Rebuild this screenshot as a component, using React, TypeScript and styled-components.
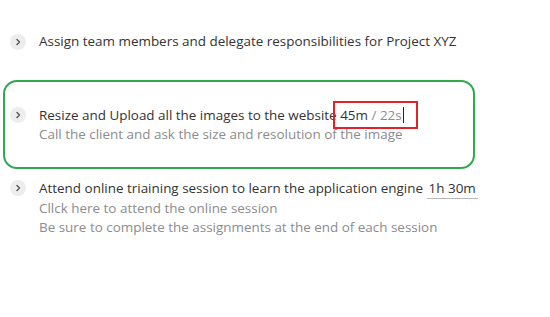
import styled, { createGlobalStyle } from "styled-components";

const GlobalStyle = createGlobalStyle`
  html, body {
    margin: 0;
    padding: 0;
    background: #ffffff;
  }
  body {
    font-family: "Open Sans", "Noto Sans", Arial, sans-serif;
    color: #333333;
  }
`;

const TaskList = styled.div`
  display: flex;
  flex-direction: column;
  padding-top: 32px;
  width: 550px;
`;

const Highlight = styled.div`
  margin: 29px 0 0 3px;
  width: 468px;
  border: 2px solid #2fa84f;
  border-radius: 14px;
  padding: 23.5px 0;
`;

const Task = styled.div<{ $inset: number; $gap?: number }>`
  display: flex;
  align-items: flex-start;
  gap: 13px;
  padding-left: ${({ $inset }) => $inset}px;
  margin-top: ${({ $gap }) => $gap ?? 0}px;
`;

const Chevron = styled.span`
  flex: none;
  display: flex;
  align-items: center;
  justify-content: center;
  width: 16px;
  height: 16px;
  margin-top: 1.5px;
  border-radius: 50%;
  background: #ededed;
  color: #555555;
`;

const Body = styled.div`
  display: flex;
  flex-direction: column;
`;

const Title = styled.div`
  font-size: 13.45px;
  line-height: 19px;
  color: #333333;
  white-space: nowrap;
`;

const Note = styled.div`
  font-size: 13.45px;
  line-height: 19px;
  color: #8c8c8c;
  white-space: nowrap;
`;

const TimeField = styled.span`
  position: relative;
  &::after {
    content: "";
    position: absolute;
    left: -7px;
    right: -14px;
    top: -5px;
    bottom: -5px;
    border: 2px solid #e0232b;
  }
`;

const Spent = styled.span`
  color: #333333;
`;

const Limit = styled.span`
  color: #8c8c8c;
`;

const Caret = styled.span`
  display: inline-block;
  width: 1px;
  height: 16px;
  margin-left: 1px;
  vertical-align: -3px;
  background: #222222;
`;

const Estimate = styled.span`
  display: inline-block;
  line-height: 17px;
  padding: 0 2px 1px;
  border-bottom: 1px solid #b8b8b8;
`;

const ChevronIcon = () => (
  <svg width="8" height="8" viewBox="0 0 8 8" fill="none">
    <path d="M3 1.5 L5.5 4 L3 6.5" stroke="currentColor" strokeWidth="1.4" strokeLinecap="round" strokeLinejoin="round" />
  </svg>
);

export default function App() {
  return (
    <>
      <GlobalStyle />
      <TaskList>
        <Task $inset={10}>
          <Chevron>
            <ChevronIcon />
          </Chevron>
          <Body>
            <Title>Assign team members and delegate responsibilities for Project XYZ</Title>
          </Body>
        </Task>

        <Highlight>
          <Task $inset={5}>
            <Chevron>
              <ChevronIcon />
            </Chevron>
            <Body>
              <Title>
                Resize and Upload all the images to the website{" "}
                <TimeField>
                  <Spent>45m</Spent>
                  <Limit> / 22s</Limit>
                  <Caret />
                </TimeField>
              </Title>
              <Note>Call the client and ask the size and resolution of the image</Note>
            </Body>
          </Task>
        </Highlight>

        <Task $inset={10} $gap={9.5}>
          <Chevron>
            <ChevronIcon />
          </Chevron>
          <Body>
            <Title>
              Attend online triaining session to learn the application engine <Estimate>1h 30m</Estimate>
            </Title>
            <Note>Cllck here to attend the online session</Note>
            <Note>Be sure to complete the assignments at the end of each session</Note>
          </Body>
        </Task>
      </TaskList>
    </>
  );
}
